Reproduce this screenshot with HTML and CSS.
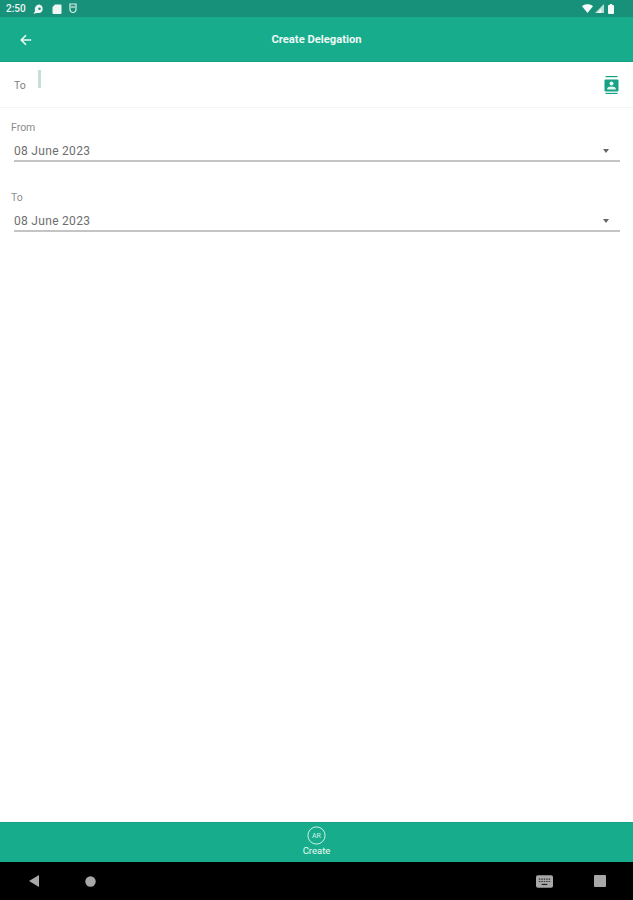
FILE: index.html
```html
<!DOCTYPE html>
<html lang="en">
<head>
    <meta charset="UTF-8">
    <meta name="viewport" content="width=device-width, initial-scale=1.0">
    <title>Create Delegation</title>
    <link rel="stylesheet" href="styles.css">
</head>
<body>
    <div class="screen">
        <div class="status-bar">
            <div class="status-left">
                <span class="clock">2:50</span>
                <svg class="status-icon" width="12" height="10" viewBox="0 0 12 10"><path d="M6.5 .5a4.5 4.5 0 0 1 0 8.6H4L.5 9.8l1.7-3A4.5 4.5 0 0 1 6.5 .5z" fill="#eef7f4"/><circle cx="6.5" cy="4.8" r="1.3" fill="#17917a"/></svg>
                <svg class="status-icon" width="10" height="10" viewBox="0 0 10 10"><path d="M3 .5h5.5a1 1 0 0 1 1 1v7.4a1 1 0 0 1-1 1h-7a1 1 0 0 1-1-1V3z" fill="#eef7f4"/></svg>
                <svg class="status-icon" width="8" height="11" viewBox="0 0 8 11"><path d="M1 1h6v5.5a3 3 0 0 1-6 0z" fill="none" stroke="#dcefe9" stroke-width="1.2"/><path d="M2 4h4" stroke="#dcefe9" stroke-width="1.2"/></svg>
            </div>
            <div class="status-right">
                <svg width="11" height="9" viewBox="0 0 11 9"><path d="M0 2.2C3 -.4 8 -.4 11 2.2L5.5 9z" fill="#f4faf8"/></svg>
                <svg width="9" height="9" viewBox="0 0 10 10"><path d="M10 0v10H0z" fill="#b9ded4"/><path d="M7 5v5H3z" fill="#f4faf8"/></svg>
                <svg class="battery" width="6" height="10" viewBox="0 0 6 10"><rect y="1" width="6" height="9" rx="1" fill="#f4faf8"/><rect x="1.8" width="2.4" height="1.5" fill="#f4faf8"/></svg>
            </div>
        </div>

        <header class="app-bar">
            <svg class="back-icon" width="12" height="12" viewBox="0 0 14 14"><path d="M13 7H2M7 1.5 1.5 7 7 12.5" fill="none" stroke="#ecf8f5" stroke-width="1.9"/></svg>
            <h1>Create Delegation</h1>
        </header>

        <div class="to-row">
            <span class="to-label">To</span>
            <span class="caret"></span>
            <svg class="contacts-icon" width="15" height="18" viewBox="0 0 15 18">
                <rect x="1.5" y="0" width="12" height="1.2" fill="#17a185"/>
                <rect x="1.5" y="16.8" width="12" height="1.2" fill="#17a185"/>
                <rect x="0.5" y="3.5" width="14" height="12" rx="1" fill="#17a185"/>
                <circle cx="7.5" cy="7.6" r="2" fill="#e6f5f1"/>
                <path d="M3 13.4c0-2.1 2.4-2.8 4.5-2.8s4.5 .7 4.5 2.8z" fill="#e6f5f1"/>
            </svg>
        </div>

        <main class="form">
            <div class="field">
                <label class="field-label">From</label>
                <div class="select-box">
                    <span>08 June 2023</span>
                    <span class="arrow"></span>
                </div>
            </div>
            <div class="field">
                <label class="field-label">To</label>
                <div class="select-box">
                    <span>08 June 2023</span>
                    <span class="arrow"></span>
                </div>
            </div>
        </main>

        <div class="bottom-bar">
            <svg width="19" height="19" viewBox="0 0 19 19">
                <circle cx="9.5" cy="9.5" r="8.6" fill="none" stroke="#d5efe8" stroke-width="1"/>
                <text x="9.5" y="12" text-anchor="middle" class="badge-text">AR</text>
            </svg>
            <span class="bottom-label">Create</span>
        </div>

        <div class="nav-bar">
            <span class="nav-left">
                <svg width="12" height="14" viewBox="0 0 12 14"><path d="M11 1v12L1 7z" fill="#a8a8a8"/></svg>
                <svg width="11" height="11" viewBox="0 0 11 11"><circle cx="5.5" cy="5.5" r="5.2" fill="#a8a8a8"/></svg>
            </span>
            <span class="nav-right">
                <svg width="17" height="13" viewBox="0 0 18 13"><rect width="18" height="13" rx="2" fill="#a8a8a8"/><path d="M3 4h12M3 6.5h12" stroke="#333" stroke-width="1.2" stroke-dasharray="1.6 1"/><path d="M6 9.6h6" stroke="#222" stroke-width="1.3"/></svg>
                <svg width="12" height="12" viewBox="0 0 12 12"><rect width="12" height="12" rx="1" fill="#a8a8a8"/></svg>
            </span>
        </div>
    </div>
</body>
</html>
```

FILE: styles.css
```css
html, body {
    margin: 0;
    padding: 0;
}
body {
    font-family: Roboto, "Liberation Sans", sans-serif;
    background: white;
}
.screen {
    width: 633px;
    height: 900px;
    display: flex;
    flex-direction: column;
    overflow: hidden;
}
.status-bar {
    height: 17px;
    background: #17917a;
    display: flex;
    justify-content: space-between;
    align-items: center;
    padding: 0 19px 0 6px;
    color: #eef7f4;
}
.status-left {
    display: flex;
    align-items: center;
}
.clock {
    font-size: 10px;
    font-weight: 500;
    margin-right: 7px;
}
.status-icon {
    margin-right: 7px;
}
.status-right {
    display: flex;
    align-items: center;
    gap: 2px;
}
.battery {
    margin-left: 2px;
}
.app-bar {
    height: 45px;
    background: #17ad8c;
    border-bottom: 1px solid #14a083;
    box-sizing: border-box;
    display: flex;
    align-items: center;
    justify-content: center;
    position: relative;
}
.back-icon {
    position: absolute;
    left: 20px;
    top: 17px;
}
.app-bar h1 {
    margin: 0;
    font-size: 11.2px;
    font-weight: 700;
    color: #eef9f6;
}
.to-row {
    height: 46px;
    border-bottom: 1px solid #f4f4f4;
    display: flex;
    align-items: flex-start;
    padding: 0 14px;
    box-sizing: border-box;
}
.to-label {
    font-size: 10.5px;
    color: #7d7d7d;
    margin-top: 17px;
}
.caret {
    width: 3px;
    height: 18px;
    background: #c6e0d9;
    margin: 8px 0 0 12px;
}
.contacts-icon {
    margin: 14px 0 0 auto;
}
.form {
    flex: 1;
    padding: 13px 13px 0 11px;
}
.field {
    margin-bottom: 29px;
}
.field-label {
    display: block;
    font-size: 10.5px;
    color: #8c8c8c;
    line-height: 13px;
}
.select-box {
    height: 19px;
    padding-top: 3px;
    margin: 4px 0 0 3px;
    border-bottom: 2px solid #c4c4c4;
    display: flex;
    justify-content: space-between;
    align-items: center;
    font-size: 12px;
    letter-spacing: 0.3px;
    color: #6e6e6e;
}
.arrow {
    width: 0;
    height: 0;
    border-left: 3px solid transparent;
    border-right: 3px solid transparent;
    border-top: 4px solid #666;
    margin-right: 11px;
}
.bottom-bar {
    height: 40px;
    background: #17ad8c;
    border-top: 1px solid #14a083;
    box-sizing: border-box;
    display: flex;
    flex-direction: column;
    align-items: center;
    padding-top: 3px;
}
.badge-text {
    font-size: 7px;
    fill: #d5efe8;
}
.bottom-label {
    font-size: 9.5px;
    line-height: 11px;
    color: #eef9f6;
}
.nav-bar {
    height: 38px;
    background: black;
    display: flex;
    justify-content: space-between;
    align-items: center;
    padding: 0 27px 0 28px;
}
.nav-left {
    display: flex;
    align-items: center;
    gap: 45px;
}
.nav-right {
    display: flex;
    align-items: center;
    gap: 41px;
    margin-left: auto;
}
```
